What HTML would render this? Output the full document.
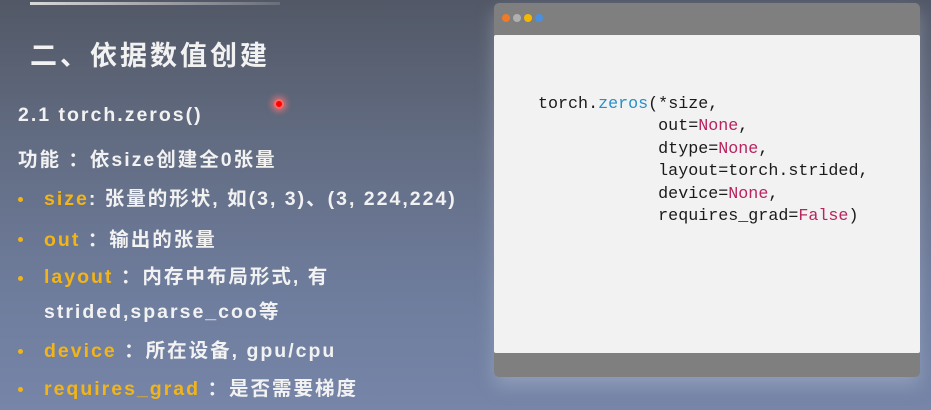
<!DOCTYPE html>
<html><head><meta charset="utf-8"><style>
*{margin:0;padding:0;box-sizing:border-box}
body{width:931px;height:410px;overflow:hidden;position:relative;background:linear-gradient(180deg,#525866 0%,#626c82 35%,#6e7c9c 70%,#7685a8 100%);font-family:"Liberation Sans","Noto Sans CJK SC",sans-serif;color:#f2f2f2}
.topline{position:absolute;left:30px;top:2px;width:250px;height:3px;background:linear-gradient(90deg,#d8d8d8,rgba(200,200,200,0.2))}
.t{position:absolute;white-space:nowrap;font-weight:bold;letter-spacing:2px}
.h{left:30px;top:34px;font-size:27px;letter-spacing:3px}
.s{font-size:19.5px}
.y{color:#f2b416}
.dot{position:absolute;left:18px;width:5px;height:5px;border-radius:50%;background:#f2b416}
.win{position:absolute;left:494px;top:3px;width:426px;height:374px;background:#7f7f7f;border-radius:5px;box-shadow:0 8px 18px rgba(200,210,230,0.35)}
.body{position:absolute;left:0;top:32px;width:426px;height:318px;background:#f2f2f2;border-radius:2px}
.c{position:absolute;width:8px;height:8px;border-radius:50%;top:11px}
pre{position:absolute;left:44px;top:59px;font-family:"Liberation Mono",monospace;font-size:16.7px;line-height:22.4px;color:#1a1a1a}
.b{color:#2a8fc8}.k{color:#b8245e}
.laser{position:absolute;left:274px;top:99px;width:10px;height:10px;border-radius:50%;background:#f00;box-shadow:0 0 6px 3px rgba(255,120,120,0.6);border:2px solid #f66}
</style></head><body>
<div class="topline"></div>
<div class="t h">二、依据数值创建</div>
<div class="laser"></div>
<div class="t s" style="left:18px;top:104px">2.1 torch.zeros()</div>
<div class="t s" style="left:18px;top:143px">功能 ：依size创建全0张量</div>
<div class="dot" style="top:197px"></div>
<div class="t s" style="left:44px;top:182px"><span class="y">size</span>: 张量的形状, 如(3, 3)、(3, 224,224)</div>
<div class="dot" style="top:237px"></div>
<div class="t s" style="left:44px;top:223px"><span class="y">out</span> ：输出的张量</div>
<div class="dot" style="top:276px"></div>
<div class="t s" style="left:44px;top:260px"><span class="y">layout</span> ：内存中布局形式, 有</div>
<div class="t s" style="left:44px;top:295px">strided,sparse_coo等</div>
<div class="dot" style="top:349px"></div>
<div class="t s" style="left:44px;top:334px"><span class="y">device</span> ：所在设备, gpu/cpu</div>
<div class="dot" style="top:387px"></div>
<div class="t s" style="left:44px;top:372px"><span class="y">requires_grad</span> ：是否需要梯度</div>
<div class="win">
<div class="c" style="left:8px;background:#f07a28"></div>
<div class="c" style="left:19px;background:#b0b0b0"></div>
<div class="c" style="left:30px;background:#f5b800"></div>
<div class="c" style="left:41px;background:#4a90e0"></div>
<div class="body">
<pre>torch.<span class="b">zeros</span>(*size,
            out=<span class="k">None</span>,
            dtype=<span class="k">None</span>,
            layout=torch.strided,
            device=<span class="k">None</span>,
            requires_grad=<span class="k">False</span>)</pre>
</div></div>
</body></html>
